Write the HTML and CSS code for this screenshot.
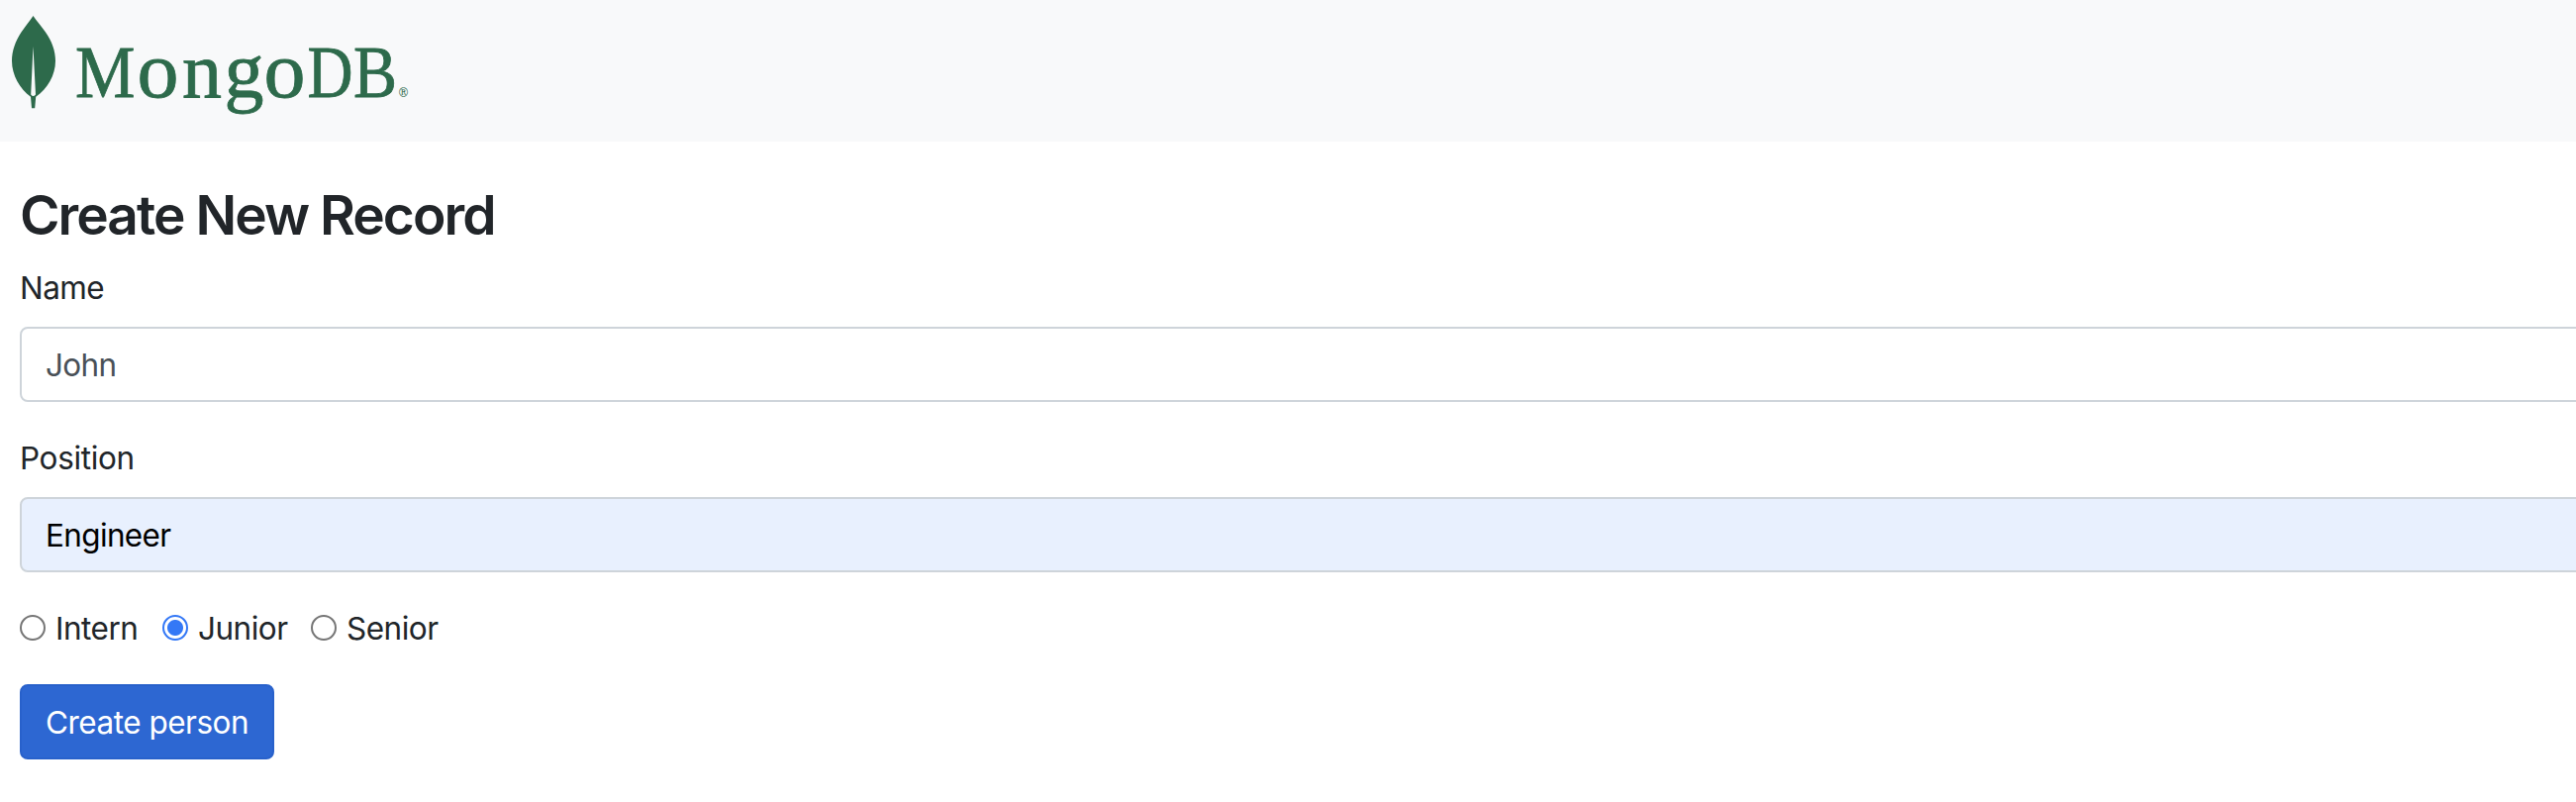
FILE: index.html
```html
<!DOCTYPE html>
<html lang="en">
<head>
<meta charset="utf-8">
<title>Create New Record</title>
<link rel="stylesheet" href="styles.css">
</head>
<body>
<header class="navbar">
  <svg class="logo" width="420" height="143" viewBox="0 0 420 143" role="img" aria-label="MongoDB">
    <path class="leaf" fill-rule="evenodd" d="M33.500 16C37 21.500 42 26.500 46 32.500C52.500 42 56 51 56 61.500C56 76 48 89.500 36.200 97.800L35.200 109.200H32L31 97.800C20 89.500 12 76 12 61.500C12 51 15.500 42 21.500 32.500C25.500 26.500 30 21.500 33.500 16ZM33.500 47L31.200 95.500Q33.500 98.600 36 95.500Z"/>
    <text class="wordmark" y="97.500"><tspan class="cap" x="76" textLength="60.500" lengthAdjust="spacingAndGlyphs">M</tspan><tspan x="138.500" textLength="42" lengthAdjust="spacingAndGlyphs">o</tspan><tspan x="184">n</tspan><tspan x="226.500">g</tspan><tspan x="266.500" textLength="42" lengthAdjust="spacingAndGlyphs">o</tspan><tspan class="cap" x="310.500" textLength="46" lengthAdjust="spacingAndGlyphs">D</tspan><tspan class="cap" x="357" textLength="44" lengthAdjust="spacingAndGlyphs">B</tspan></text>
    <text class="registered" x="401.500" y="98">®</text>
  </svg>
</header>
<main class="content">
  <h3 class="title">Create New Record</h3>
  <form class="form">
    <label class="label name-label" for="name">Name</label>
    <input class="control" id="name" type="text" placeholder="John">
    <label class="label position-label" for="position">Position</label>
    <input class="control filled" id="position" type="text" value="Engineer">
    <div class="radios">
      <label class="option intern"><input class="radio" type="radio" name="level"><span class="option-text">Intern</span></label>
      <label class="option junior"><input class="radio" type="radio" name="level" checked><span class="option-text">Junior</span></label>
      <label class="option senior"><input class="radio" type="radio" name="level"><span class="option-text">Senior</span></label>
    </div>
    <button class="submit" type="button">Create person</button>
  </form>
</main>
</body>
</html>
```
FILE: styles.css
```css
* { box-sizing: border-box; }
body {
  margin: 0;
  background: #fff;
  color: #212529;
  font-family: Inter, "Liberation Sans", sans-serif;
  font-size: 31.5px;
  line-height: 48px;
  letter-spacing: -0.6px;
  overflow: hidden;
}
.navbar { height: 143px; background: #f8f9fa; }
.logo { display: block; }
.leaf { fill: #2d6a4b; }
.wordmark {
  fill: #2d6a4b;
  stroke: #2d6a4b;
  stroke-width: 0.8px;
  font-family: "Liberation Serif", serif;
  font-size: 80px;
  letter-spacing: 0;
}
.cap { font-size: 74px; }
.registered {
  fill: #2d6a4b;
  font-family: "DejaVu Serif", serif;
  font-size: 12px;
  letter-spacing: 0;
}
.content { padding: 41px 0 0 20px; }
.title {
  margin: 0 0 16px;
  font-size: 55px;
  font-weight: 570;
  line-height: 67px;
  letter-spacing: -1.95px;
}
.form { display: flex; flex-direction: column; align-items: flex-start; }
.label { margin-bottom: 15px; }
.position-label { letter-spacing: -0.35px; }
.control {
  width: 2620px;
  height: 76px;
  margin: 0 0 33px;
  padding: 12px 24px;
  border: 2px solid #ced4da;
  border-radius: 8px;
  background: #fff;
  font: inherit;
  letter-spacing: -0.65px;
  color: #212529;
}
.control::placeholder { color: #495057; opacity: 1; }
.filled { margin-bottom: 32px; background: #e8f0fe; color: #000; }
.radios { display: flex; height: 48px; margin-bottom: 33px; letter-spacing: -0.5px; }
.option { display: flex; align-items: center; gap: 10px; }
.option-text { padding-top: 2px; }
.intern { width: 144px; }
.junior { width: 150px; }
.radio {
  appearance: none;
  flex: none;
  width: 26px;
  height: 26px;
  margin: 0;
  border: 2px solid #767676;
  border-radius: 50%;
  background: #fff;
}
.radio:checked {
  border-color: #3478f6;
  background: radial-gradient(circle, #3478f6 7.5px, #fff 8.5px);
}
.submit {
  width: 257px;
  height: 76px;
  padding: 1px 0 0;
  border: 2px solid #2861cb;
  border-radius: 8px;
  background: #2d67d2;
  color: #fff;
  font: inherit;
  letter-spacing: -0.5px;
}
```
